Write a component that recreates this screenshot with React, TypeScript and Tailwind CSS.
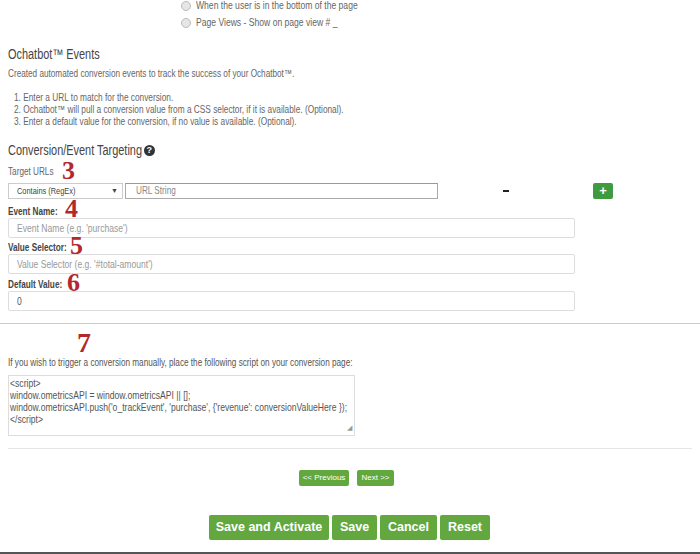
import React from 'react';

const Num: React.FC<{ n: string; className: string }> = ({ n, className }) => (
  <span
    className={`absolute font-bold text-[#b3282d] ${className}`}
    style={{ fontFamily: '"Liberation Serif", "Times New Roman", serif' }}
  >
    {n}
  </span>
);

// the screenshot text is squeezed horizontally, so text runs are scaled on x
const Sq: React.FC<{ children: React.ReactNode; className?: string }> = ({ children, className = '' }) => (
  <span className={`inline-block origin-left whitespace-nowrap scale-x-[0.78] ${className}`}>{children}</span>
);

const SCRIPT = `<script>
window.ometricsAPI = window.ometricsAPI || [];
window.ometricsAPI.push('o_trackEvent', 'purchase', {'revenue': conversionValueHere });
</script>`;

const Field: React.FC<{ label: string; text: string; muted?: boolean; mt: string }> = ({ label, text, muted = true, mt }) => (
  <>
    <label className={`block ${mt} text-[10.5px] leading-[14px] font-bold text-[#444]`}>
      <Sq>{label}</Sq>
    </label>
    <div className={`w-[567px] h-[20px] flex items-center border border-[#ddd] rounded-[2px] pl-[8px] text-[11px] ${muted ? 'text-[#999]' : 'text-[#555]'}`}>
      <Sq>{text}</Sq>
    </div>
  </>
);

export default function App() {
  return (
    <div
      className="relative w-[700px] h-[554px] overflow-hidden bg-white text-[#555]"
      style={{ fontFamily: '"Liberation Sans", Arial, sans-serif' }}
    >
      {/* radio options */}
      <div className="-mt-[3px] pl-[181px] text-[11px] text-[#666]">
        {['When the user is in the bottom of the page', 'Page Views - Show on page view # _'].map(t => (
          <div key={t} className="flex items-center h-[17px] gap-[5px]">
            <span className="w-[10px] h-[10px] rounded-full border border-[#bbb] bg-[#e6e6e6]" />
            <Sq className="scale-x-[0.76]">{t}</Sq>
          </div>
        ))}
      </div>

      <div className="px-2">
        <h3 className="mt-[13px] text-[14px] leading-[20px] text-[#444]">
          <Sq className="scale-x-[0.77]">Ochatbot™ Events</Sq>
        </h3>
        <p className="mt-[1px] text-[10.5px] leading-[16px] text-[#666]">
          <Sq className="scale-x-[0.8]">Created automated conversion events to track the success of your Ochatbot™.</Sq>
        </p>
        <ol className="mt-[10px] pl-[6px] text-[10.5px] leading-[12px] text-[#666]">
          <li><Sq className="scale-x-[0.79]">1. Enter a URL to match for the conversion.</Sq></li>
          <li><Sq className="scale-x-[0.79]">2. Ochatbot™ will pull a conversion value from a CSS selector, if it is available. (Optional).</Sq></li>
          <li><Sq className="scale-x-[0.79]">3. Enter a default value for the conversion, if no value is available. (Optional).</Sq></li>
        </ol>

        <h3 className="mt-[13px] flex items-center text-[14px] leading-[20px] text-[#444]">
          <Sq className="scale-x-[0.77]">Conversion/Event Targeting</Sq>
          <span className="-ml-[36px] w-[11px] h-[11px] rounded-full bg-[#333] text-white text-[9px] font-bold leading-[11px] text-center">?</span>
        </h3>

        <div className="mt-[4px] text-[10.5px] leading-[14px] text-[#666]">
          <Sq>Target URLs</Sq>
        </div>
        <div className="mt-[5px] flex items-center h-[16px]">
          <div className="w-[115px] h-[16px] flex items-center justify-between border border-[#ccc] bg-white pl-[8px] pr-[4px] text-[9.5px] text-[#444]">
            <Sq>Contains (RegEx)</Sq>
            <span className="text-[7px]">▼</span>
          </div>
          <div className="ml-[2px] w-[313px] h-[16px] flex items-center border border-[#aaa] border-t-[#999] pl-[10px] text-[10.5px] text-[#888]">
            <Sq>URL String</Sq>
          </div>
          <span className="ml-[65px] w-[6px] h-[2px] bg-[#222]" />
          <button className="ml-[84px] w-[20px] h-[16px] rounded-[2px] bg-[#3f9b40] text-white text-[13px] font-bold leading-[16px]">+</button>
        </div>

        <Field mt="mt-[5px]" label="Event Name:" text="Event Name (e.g. 'purchase')" />
        <Field mt="mt-[2px]" label="Value Selector:" text="Value Selector (e.g. '#total-amount')" />
        <Field mt="mt-[3px]" label="Default Value:" text="0" muted={false} />
      </div>

      <hr className="mt-[12px] border-0 h-[1px] bg-[#ccc]" />

      <div className="px-2">
        <p className="mt-[31px] text-[10.5px] leading-[14px] text-[#555]">
          <Sq className="scale-x-[0.76]">If you wish to trigger a conversion manually, place the following script on your conversion page:</Sq>
        </p>
        <div className="relative mt-[6px] w-[347px] h-[61px] border border-[#ddd] pl-[1px] pt-[1px] text-[10.5px] leading-[12px] text-[#555]">
          <span className="block origin-left whitespace-pre scale-x-[0.82]">{SCRIPT}</span>
          <span className="absolute right-[2px] bottom-[1px] text-[7px] text-[#999]">◢</span>
        </div>
        <hr className="mt-[12px] border-0 h-[1px] bg-[#e5e5e5]" />

        <div className="mt-[21px] flex justify-center gap-[8px] pr-[7px]">
          <button className="w-[50px] h-[16px] rounded-[2px] bg-[#62a83f] text-white text-[8px] leading-[16px]">&lt;&lt; Previous</button>
          <button className="w-[37px] h-[16px] rounded-[2px] bg-[#62a83f] text-white text-[8px] leading-[16px]">Next &gt;&gt;</button>
        </div>

        <div className="mt-[29px] flex justify-center gap-[3px] pr-[1px]">
          {[
            ['Save and Activate', 'w-[120px]'],
            ['Save', 'w-[45px]'],
            ['Cancel', 'w-[57px]'],
            ['Reset', 'w-[50px]'],
          ].map(([t, w]) => (
            <button key={t} className={`${w} h-[25px] rounded-[2px] bg-[#62a83f] text-white text-[12.5px] font-bold`}>
              {t}
            </button>
          ))}
        </div>
      </div>

      <div className="mt-[12px] h-[2px] bg-[#555]" />

      <Num n="3" className="left-[62px] top-[158px] text-[26px] leading-none" />
      <Num n="4" className="left-[65px] top-[196px] text-[26px] leading-none" />
      <Num n="5" className="left-[70px] top-[233px] text-[26px] leading-none" />
      <Num n="6" className="left-[67px] top-[270px] text-[26px] leading-none" />
      <Num n="7" className="left-[77px] top-[334px] h-[18px] text-[28px] leading-[18px]" />
    </div>
  );
}
